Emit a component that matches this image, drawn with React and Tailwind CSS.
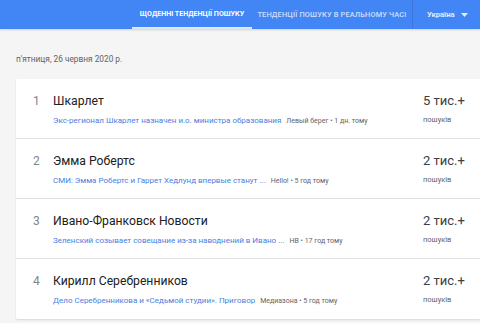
import React from "react";

const rows = [
  { n: 1, title: "Шкарлет", link: "Экс-регионал Шкарлет назначен и.о. министра образования", src: "Левый берег • 1 дн. тому", count: "5 тис.+" },
  { n: 2, title: "Эмма Робертс", link: "СМИ: Эмма Робертс и Гаррет Хедлунд впервые станут ...", src: "Hello! • 5 год тому", count: "2 тис.+" },
  { n: 3, title: "Ивано-Франковск Новости", link: "Зеленский созывает совещание из-за наводнений в Ивано ...", src: "НВ • 17 год тому", count: "2 тис.+" },
  { n: 4, title: "Кирилл Серебренников", link: "Дело Серебренникова и «Седьмой студии». Приговор", src: "Медиазона • 5 год тому", count: "2 тис.+" },
];

export default function App() {
  return (
    <div className="w-[480px] h-[323px] overflow-hidden bg-[#f5f5f5]" style={{ fontFamily: "Roboto, 'Liberation Sans', sans-serif" }}>
      <header className="h-[29px] bg-[#4285f4] flex items-stretch shadow-[0_1px_2px_rgba(0,0,0,0.15)]">
        <div className="w-[132px]" />
        <div className="w-[120px] relative flex items-center justify-center text-[7.1px] font-bold text-white">
          ЩОДЕННІ ТЕНДЕНЦІЇ ПОШУКУ
          <span className="absolute left-0 right-0 bottom-0 h-[2px] bg-[#dfe9fb]" />
        </div>
        <div className="w-[160px] flex items-center justify-center text-[7.4px] font-medium text-white/75 tracking-[0.15px]">
          ТЕНДЕНЦІЇ ПОШУКУ В РЕАЛЬНОМУ ЧАСІ
        </div>
        <div className="flex-1 border-l border-black/10 flex items-center pl-[14px] text-[7.6px] font-bold text-white/85">
          Україна
          <svg className="ml-[6px] w-[7px] h-[4px]" viewBox="0 0 7 4"><path d="M0 0h7L3.5 4z" fill="rgba(255,255,255,0.85)" /></svg>
        </div>
      </header>

      <div className="pl-4 pt-[26px]">
        <div className="text-[8.3px] text-[#5f6368] leading-none">п'ятниця, 26 червня 2020 р.</div>
        <div className="mt-[16px] bg-white rounded-l-[2px] shadow-[0_1px_2px_rgba(0,0,0,0.12)]">
          {rows.map((r, i) => (
            <div key={r.n} className={"h-[60px] flex items-start " + (i < rows.length - 1 ? "border-b border-[#e0e0e0]" : "")}>
              <div className="w-[37px] pl-[17px] pt-[16px] text-[12px] text-[#80868b] leading-none">{r.n}</div>
              <div className="w-[370px] pt-[16px]">
                <div className="text-[12.2px] text-[#212121] leading-none">{r.title}</div>
                <div className="mt-[9px] flex items-baseline whitespace-nowrap leading-none">
                  <span className="text-[8px] text-[#4a80e0]">{r.link}</span>
                  <span className="ml-[5px] text-[7px] text-[#5f6368]">{r.src}</span>
                </div>
              </div>
              <div className="pt-[15px]">
                <div className="text-[13px] text-[#3c4043] leading-none">{r.count}</div>
                <div className="mt-[9px] text-[7.5px] text-[#5f6368] leading-none">пошуків</div>
              </div>
            </div>
          ))}
        </div>
      </div>
    </div>
  );
}
